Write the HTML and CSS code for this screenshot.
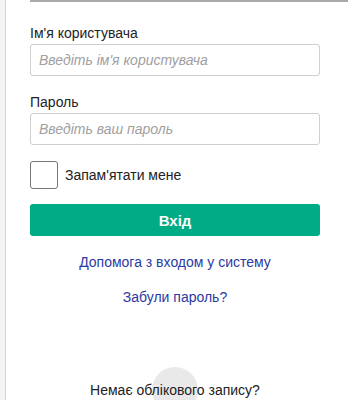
FILE: index.html
```html
<!DOCTYPE html>
<html lang="uk">
<head>
    <meta charset="UTF-8">
    <meta name="viewport" content="width=device-width, initial-scale=1.0">
    <title>Вхід</title>
    <link rel="stylesheet" href="styles.css">
</head>
<body>
    <div class="page">
        <div class="side"></div>
        <div class="content">
            <div class="top-rule"></div>
            <form class="login">
                <label class="field-label" for="user">Ім'я користувача</label>
                <input class="field" id="user" type="text" placeholder="Введіть ім'я користувача">
                <label class="field-label" for="pass">Пароль</label>
                <input class="field" id="pass" type="password" placeholder="Введіть ваш пароль">
                <label class="remember">
                    <span class="box"></span>
                    <span>Запам'ятати мене</span>
                </label>
                <button class="btn" type="button">Вхід</button>
            </form>
            <a class="link help" href="#">Допомога з входом у систему</a>
            <a class="link forgot" href="#">Забули пароль?</a>
            <div class="signup">
                <span class="circle"></span>
                <span class="signup-text">Немає облікового запису?</span>
            </div>
        </div>
    </div>
</body>
</html>
```

FILE: styles.css
```css
* {
    margin: 0;
    padding: 0;
    box-sizing: border-box;
}
body {
    font-family: "Liberation Sans", Arial, sans-serif;
    font-size: 14px;
    color: #222;
    background: #fff;
}
.page {
    display: flex;
    min-height: 400px;
}
.side {
    width: 6px;
    background: #f4f4f4;
    border-right: 1px solid #c2dcf2;
}
.content {
    flex: 1;
    padding: 0 28px 0 24px;
}
.top-rule {
    height: 2px;
    background: #a9a9a9;
    margin-right: -28px;
}
.login {
    display: flex;
    flex-direction: column;
    padding-top: 23px;
}
.field-label {
    line-height: 17px;
    margin-bottom: 2px;
}
.field {
    height: 32px;
    border: 1px solid #cfcfcf;
    border-radius: 3px;
    padding: 0 8px;
    font: inherit;
    margin-bottom: 18px;
}
.field::placeholder {
    color: #a0a0a0;
    font-style: italic;
}
.remember {
    display: flex;
    align-items: center;
    gap: 7px;
    margin-top: -2px;
}
.box {
    width: 28px;
    height: 28px;
    border: 1px solid #777;
    border-radius: 3px;
}
.btn {
    margin-top: 15px;
    height: 32px;
    border: none;
    border-radius: 3px;
    background: #00ac85;
    color: #fff;
    font: bold 15px "Liberation Sans", Arial, sans-serif;
}
.link {
    display: block;
    text-align: center;
    color: #2b3aa3;
    text-decoration: none;
    line-height: 17px;
}
.help {
    margin-top: 18px;
}
.forgot {
    margin-top: 18px;
}
.signup {
    position: relative;
    display: flex;
    justify-content: center;
    margin-top: 76px;
}
.circle {
    position: absolute;
    top: -15px;
    left: 50%;
    width: 46px;
    height: 46px;
    margin-left: -23px;
    border-radius: 50%;
    background: #e9e9e9;
}
.signup-text {
    position: relative;
    line-height: 17px;
}
```
